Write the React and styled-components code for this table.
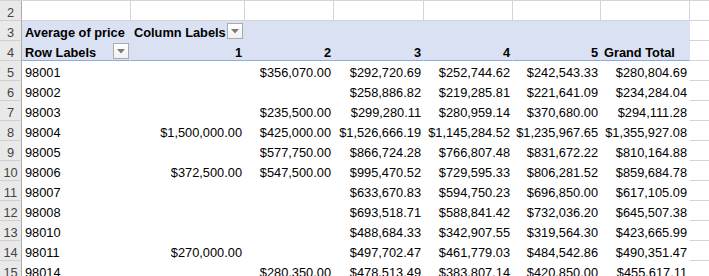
import React from 'react'
import styled, { createGlobalStyle } from 'styled-components'

const GlobalStyle = createGlobalStyle`
  html, body {
    margin: 0;
    padding: 0;
    background: #ffffff;
    overflow: hidden;
  }
  body {
    font-family: "Liberation Sans", Arial, sans-serif;
    font-size: 12.8px;
    color: #000000;
  }
`

const GRID = '#D4D4D4'
const PIVOT_FILL = '#D9E1F2'
const PIVOT_LINE = '#8EA9DB'

const Sheet = styled.div`
  display: grid;
  grid-template-columns: 22px 109px 114px 89px 90px 89px 88px 89px 1fr;
  grid-auto-rows: 20px;
  width: 709px;
  height: 276px;
  overflow: hidden;
  border-top: 1px solid ${GRID};
  box-sizing: border-box;
`

const RowHead = styled.div`
  box-sizing: border-box;
  background: #E9E9E9;
  border-right: 1px solid #ABABAB;
  border-bottom: 1px solid #CFCFCF;
  color: #444444;
  text-align: center;
  padding-top: 2px;
  line-height: 19px;
  overflow: visible;
`

const Cell = styled.div`
  box-sizing: border-box;
  position: relative;
  display: flex;
  align-items: flex-start;
  justify-content: ${({ $align }) => ($align === 'right' ? 'flex-end' : 'space-between')};
  padding: 2px 2px 0 3px;
  line-height: 19px;
  white-space: nowrap;
  font-weight: ${({ $bold }) => ($bold ? 700 : 400)};
  background: ${({ $tone }) => ($tone === 'pivot' ? PIVOT_FILL : '#ffffff')};
  border-right: 1px solid ${({ $tone }) => ($tone === 'grid' ? GRID : 'transparent')};
  border-bottom: 1px solid
    ${({ $tone, $line }) => ($line ? PIVOT_LINE : $tone === 'grid' ? GRID : 'transparent')};
`

const OuterCell = styled.div`
  box-sizing: border-box;
  border-left: 1px solid ${GRID};
  border-bottom: 1px solid ${GRID};
  margin-left: -1px;
`

const FilterButton = styled.span`
  box-sizing: border-box;
  flex: none;
  width: 16px;
  height: 16px;
  margin-right: -1px;
  border: 1px solid #ABABAB;
  background: linear-gradient(#ffffff, #F1F1F1);
  display: flex;
  align-items: center;
  justify-content: center;
`

const Filter = () => (
  <FilterButton>
    <svg width="8" height="5" viewBox="0 0 8 5">
      <polygon points="0,0 8,0 4,4.5" fill="#7A7A7A" />
    </svg>
  </FilterButton>
)

const rows = [
  ['98001', '', '$356,070.00', '$292,720.69', '$252,744.62', '$242,543.33', '$280,804.69'],
  ['98002', '', '', '$258,886.82', '$219,285.81', '$221,641.09', '$234,284.04'],
  ['98003', '', '$235,500.00', '$299,280.11', '$280,959.14', '$370,680.00', '$294,111.28'],
  ['98004', '$1,500,000.00', '$425,000.00', '$1,526,666.19', '$1,145,284.52', '$1,235,967.65', '$1,355,927.08'],
  ['98005', '', '$577,750.00', '$866,724.28', '$766,807.48', '$831,672.22', '$810,164.88'],
  ['98006', '$372,500.00', '$547,500.00', '$995,470.52', '$729,595.33', '$806,281.52', '$859,684.78'],
  ['98007', '', '', '$633,670.83', '$594,750.23', '$696,850.00', '$617,105.09'],
  ['98008', '', '', '$693,518.71', '$588,841.42', '$732,036.20', '$645,507.38'],
  ['98010', '', '', '$488,684.33', '$342,907.55', '$319,564.30', '$423,665.99'],
  ['98011', '$270,000.00', '', '$497,702.47', '$461,779.03', '$484,542.86', '$490,351.47'],
  ['98014', '', '$280,350.00', '$478,513.49', '$383,807.14', '$420,850.00', '$455,617.11'],
]

const App = () => {
  return (
    <>
      <GlobalStyle />
      <Sheet>
        {/* row 2: empty grid */}
        <RowHead>2</RowHead>
        {Array.from({ length: 7 }).map((_, i) => (
          <Cell key={i} $tone="grid" />
        ))}
        <OuterCell />

        {/* row 3: pivot title row */}
        <RowHead>3</RowHead>
        <Cell $tone="pivot" $bold>Average of price</Cell>
        <Cell $tone="pivot" $bold>
          <span>Column Labels</span>
          <Filter />
        </Cell>
        {Array.from({ length: 5 }).map((_, i) => (
          <Cell key={i} $tone="pivot" />
        ))}
        <OuterCell />

        {/* row 4: column labels */}
        <RowHead>4</RowHead>
        <Cell $tone="pivot" $bold $line>
          <span>Row Labels</span>
          <Filter />
        </Cell>
        {['1', '2', '3', '4', '5'].map((c) => (
          <Cell key={c} $tone="pivot" $bold $line $align="right">{c}</Cell>
        ))}
        <Cell $tone="pivot" $bold $line>Grand Total</Cell>
        <OuterCell />

        {rows.map((r, i) => (
          <React.Fragment key={r[0]}>
            <RowHead>{i + 5}</RowHead>
            <Cell $tone="data">{r[0]}</Cell>
            {r.slice(1).map((v, j) => (
              <Cell key={j} $tone="data" $align="right">{v}</Cell>
            ))}
            <OuterCell />
          </React.Fragment>
        ))}
      </Sheet>
    </>
  )
}

export default App
